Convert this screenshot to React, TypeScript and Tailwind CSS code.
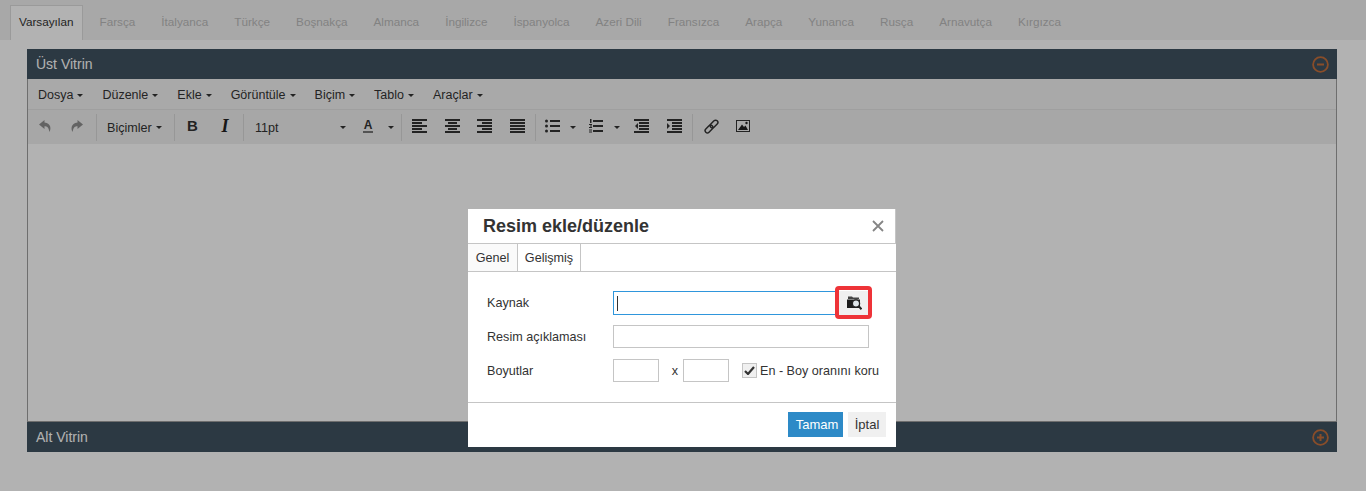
import {ReactNode} from "react";

const tabs = ["Farsça", "İtalyanca", "Türkçe", "Boşnakça", "Almanca", "İngilizce", "İspanyolca", "Azeri Dili", "Fransızca", "Arapça", "Yunanca", "Rusça", "Arnavutça", "Kırgızca"];
const menus = ["Dosya", "Düzenle", "Ekle", "Görüntüle", "Biçim", "Tablo", "Araçlar"];

const Caret = () => (
    <span className="inline-block w-0 h-0 border-x-[3.5px] border-x-transparent border-t-[3.5px] border-t-[#333]"/>
);

const Sep = ({ml}: {ml?: string}) => <div className={`w-px h-[27px] bg-[#d9d9d9] ${ml ?? ""}`}/>;

const Lines = ({rows}: {rows: number[][]}) => (
    <svg width="15" height="14" viewBox="0 0 15 14" fill="#333">
        {rows.map((r, i) => <rect key={i} x={r[0]} y={i * 3} width={r[1]} height="2"/>)}
    </svg>
);

const IconBtn = ({w, children}: {w: string; children: ReactNode}) => (
    <div className={`${w} h-[24px] pb-[2px] flex items-center justify-center`}>{children}</div>
);

const Undo = ({flip}: {flip?: boolean}) => (
    <svg width="14" height="14" viewBox="0 0 14 14" fill="#8f8f8f" className={flip ? "-scale-x-100" : ""}>
        <path d="M6.500 1 1 5.500 6.500 10V7.200c2.500 0 4 1 5 5.800 1.500-3 2-8.500-5-9.500z"/>
    </svg>
);

const Bullets = () => (
    <svg width="15" height="14" viewBox="0 0 15 14" fill="#333">
        <circle cx="1.500" cy="2" r="1.500"/><circle cx="1.500" cy="7" r="1.500"/><circle cx="1.500" cy="12" r="1.500"/>
        <rect x="5" y="1" width="10" height="2"/><rect x="5" y="6" width="10" height="2"/><rect x="5" y="11" width="10" height="2"/>
    </svg>
);

const Numbers = () => (
    <svg width="14" height="15" viewBox="0 0 14 15" fill="#333">
        <rect x="1" y="0" width="1.500" height="4"/><rect x="0" y="5" width="3" height="1"/><rect x="1" y="6.500" width="2" height="1"/><rect x="0" y="8" width="3" height="1"/><rect x="0" y="10.500" width="3" height="1"/><rect x="0" y="12.500" width="3" height="1"/>
        <rect x="4" y="1" width="10" height="2"/><rect x="4" y="6" width="10" height="2"/><rect x="4" y="11" width="10" height="2"/>
    </svg>
);

const Indent = ({out}: {out?: boolean}) => (
    <svg width="15" height="14" viewBox="0 0 15 14" fill="#333">
        <rect x="0" y="0" width="15" height="2"/>
        <rect x="5" y="3" width="10" height="2"/><rect x="5" y="6" width="10" height="2"/><rect x="5" y="9" width="10" height="2"/>
        <rect x="0" y="12" width="15" height="2"/>
        <path d={out ? "M4 4v6L1 7z" : "M0 4v6l3-3z"}/>
    </svg>
);

const LinkIcon = () => (
    <svg width="15" height="15" viewBox="0 0 15 15" fill="none" stroke="#333" strokeWidth="1.500">
        <rect x="7.750" y="0.500" width="4.500" height="9" rx="2.250" transform="rotate(45 10 5)"/>
        <rect x="2.750" y="5.500" width="4.500" height="9" rx="2.250" transform="rotate(45 5 10)"/>
    </svg>
);

const ImageIcon = () => (
    <svg width="14" height="12" viewBox="0 0 14 12">
        <rect x="0.500" y="0.500" width="13" height="11" fill="#fff" fillOpacity="0.3" stroke="#333"/>
        <path d="M2 10 6 4.500 8 7l1.500-1.500L12 10z" fill="#222"/>
        <circle cx="10.500" cy="3" r="1.200" fill="#222"/>
    </svg>
);

const Circle = ({plus}: {plus?: boolean}) => (
    <svg width="17" height="17" viewBox="0 0 17 17" fill="none" stroke="#c56f3c" strokeWidth="1.800">
        <circle cx="8.500" cy="8.500" r="7.400"/>
        <path d="M5 8.500h7" strokeWidth="2"/>
        {plus && <path d="M8.500 5v7" strokeWidth="2"/>}
    </svg>
);

const FolderSearch = () => (
    <svg width="15" height="14" viewBox="0 0 15 14">
        <path d="M1 0.500h4l1 1h6v1.500H1z" fill="#444"/>
        <path d="M0 3.500h13V12H0z" fill="#1d1d1d"/>
        <circle cx="9" cy="7.500" r="3.600" fill="#dfe6ea" stroke="#222" strokeWidth="1.300"/>
        <path d="M11.500 10 14.500 13.200" stroke="#222" strokeWidth="2"/>
    </svg>
);

const PanelBar = ({title, plus}: {title: string; plus?: boolean}) => (
    <div className={`bg-[#3f5260] flex items-center justify-between pl-[9px] pr-[8px] text-[14px] text-white ${plus ? "h-[31px] border-t border-[#9e9e9e]" : "h-[30px]"}`}>
        <span>{title}</span>
        <Circle plus={plus}/>
    </div>
);

export default function App() {
    return (
        <div className="relative h-[491px] overflow-hidden bg-white text-[12px] text-[#333]" style={{fontFamily: '"Liberation Sans", Arial, sans-serif'}}>
            <div className="h-[40px] pt-[5px] pl-[10px] bg-[#f1f1f1] flex items-stretch text-[11.72px]">
                <div className="px-2 pb-[2px] mr-2 bg-white border border-b-0 border-[#ddd] flex items-center text-[#333]">Varsayılan</div>
                {tabs.map((t) => (
                    <div key={t} className="px-2 pb-[2px] mr-2 border border-transparent flex items-center text-[#bbb]">{t}</div>
                ))}
            </div>

            <div className="mx-[27px] mt-[9px] w-[1310px]">
                <PanelBar title="Üst Vitrin"/>
                <div className="border-x border-[#9e9e9e] h-[342px] bg-white flex flex-col">
                    <div className="h-[31px] pt-[2px] bg-[#f3f3f3] border-b border-[#e4e4e4] flex items-center pl-[10px] text-[12.5px] text-[#333]">
                        {menus.map((m) => (
                            <div key={m} className="flex items-center gap-[4px] mr-[19px]">
                                {m} <Caret/>
                            </div>
                        ))}
                    </div>
                    <div className="h-[34px] bg-[#f0f0f0] flex items-center pl-[1px]">
                        <IconBtn w="w-[32px]"><Undo/></IconBtn>
                        <IconBtn w="w-[32px]"><Undo flip/></IconBtn>
                        <Sep ml="ml-[3px]"/>
                        <div className="w-[77px] pt-[2px] flex items-center pl-[10px] gap-[4px] text-[12.6px]">Biçimler <Caret/></div>
                        <Sep/>
                        <IconBtn w="w-[35px]"><span className="font-bold text-[15px] text-[#333]">B</span></IconBtn>
                        <IconBtn w="w-[33px] pr-[3px]"><span className="italic font-bold text-[18px] text-[#222]" style={{fontFamily: '"Liberation Serif", serif'}}>I</span></IconBtn>
                        <Sep/>
                        <div className="w-[112px] pt-[2px] flex items-center justify-between pl-[11px] pr-[10px] text-[12.6px]">11pt <Caret/></div>
                        <IconBtn w="w-[24px]">
                            <span className="font-bold text-[12px] leading-[12px] border-b-2 border-[#777] px-[1px]">A</span>
                        </IconBtn>
                        <div className="w-[21px] flex justify-center"><Caret/></div>
                        <Sep/>
                        <IconBtn w="w-[34px]"><Lines rows={[[0, 15], [0, 10], [0, 15], [0, 10], [0, 15]]}/></IconBtn>
                        <IconBtn w="w-[32px]"><Lines rows={[[0, 15], [3, 9], [0, 15], [3, 9], [0, 15]]}/></IconBtn>
                        <IconBtn w="w-[32px]"><Lines rows={[[0, 15], [5, 10], [0, 15], [5, 10], [0, 15]]}/></IconBtn>
                        <IconBtn w="w-[35px]"><Lines rows={[[0, 15], [0, 15], [0, 15], [0, 15], [0, 15]]}/></IconBtn>
                        <Sep/>
                        <IconBtn w="w-[32px]"><Bullets/></IconBtn>
                        <div className="w-[10px] flex justify-center"><Caret/></div>
                        <IconBtn w="w-[36px]"><Numbers/></IconBtn>
                        <div className="w-[6px] flex justify-center"><Caret/></div>
                        <IconBtn w="w-[43px]"><Indent out/></IconBtn>
                        <IconBtn w="w-[22px]"><Indent/></IconBtn>
                        <Sep ml="ml-[7px]"/>
                        <IconBtn w="w-[36px]"><LinkIcon/></IconBtn>
                        <IconBtn w="w-[28px]"><ImageIcon/></IconBtn>
                    </div>
                    <div className="flex-1"/>
                </div>
                <PanelBar title="Alt Vitrin" plus/>
            </div>

            <div className="absolute inset-0 bg-black/30"/>

            <div className="absolute left-[468px] top-[209px] w-[428px] h-[238px] bg-white flex flex-col">
                <div className="h-[35px] border-b border-r border-[#c5c5c5] flex items-center justify-between pl-[15px] pr-[11px]">
                    <span className="text-[18px] font-bold text-[#333]">Resim ekle/düzenle</span>
                    <svg width="12" height="12" viewBox="0 0 12 12" stroke="#858585" strokeWidth="1.800"><path d="M1 1l10 10M11 1 1 11"/></svg>
                </div>
                <div className="h-[28px] border-b border-[#c5c5c5] flex text-[12.6px] text-[#333]">
                    <div className="w-[50px] pt-[2px] bg-[#fafafa] border-r border-[#c5c5c5] flex items-center justify-center">Genel</div>
                    <div className="w-[63px] pt-[2px] border-r border-[#c5c5c5] flex items-center justify-center">Gelişmiş</div>
                </div>
                <div className="h-[131px] border-b border-[#c5c5c5] pt-[19px] pl-[19px] text-[12.6px] text-[#333] flex flex-col">
                    <div className="flex items-center h-[24px] mb-[10px]">
                        <span className="w-[126px]">Kaynak</span>
                        <div className="w-[223px] h-[24px] border border-[#2f96dc] flex items-center pl-[3px]">
                            <div className="w-px h-[15px] bg-[#333]"/>
                        </div>
                        <div className="relative w-[33px] h-[24px] pl-[3px] bg-[#f0f0f0] flex items-center justify-center">
                            <FolderSearch/>
                            <div className="absolute -left-[1px] -top-[5px] w-[37px] h-[33px] border-[4px] border-[#ee3338] rounded-[4px]"/>
                        </div>
                    </div>
                    <div className="flex items-center h-[23px] mb-[11px]">
                        <span className="w-[126px] pt-[2px]">Resim açıklaması</span>
                        <div className="w-[256px] h-[23px] border border-[#c5c5c5]"/>
                    </div>
                    <div className="flex items-center h-[23px]">
                        <span className="w-[126px] pt-[2px]">Boyutlar</span>
                        <div className="w-[46px] h-[23px] border border-[#c5c5c5]"/>
                        <span className="w-[24px] pl-[8px] pt-[2px] text-center">x</span>
                        <div className="w-[46px] h-[23px] border border-[#c5c5c5]"/>
                        <div className="ml-[13px] w-[15px] h-[15px] bg-[#f0f0f0] border border-[#c5c5c5] flex items-center justify-center">
                            <svg width="11" height="9" viewBox="0 0 11 9" fill="none" stroke="#333" strokeWidth="2.200"><path d="M1 5l3 3 6-7"/></svg>
                        </div>
                        <span className="ml-[3px] pt-[2px]">En - Boy oranını koru</span>
                    </div>
                </div>
                <div className="flex-1 flex items-start justify-end pt-[9px] pr-[10px] gap-[5px] text-[13px]">
                    <div className="w-[55px] h-[25px] pl-[3px] bg-[#2d8ac7] text-white flex items-center justify-center">Tamam</div>
                    <div className="w-[38px] h-[25px] bg-[#f0f0f0] text-[#333] flex items-center justify-center">İptal</div>
                </div>
            </div>
        </div>
    );
}
